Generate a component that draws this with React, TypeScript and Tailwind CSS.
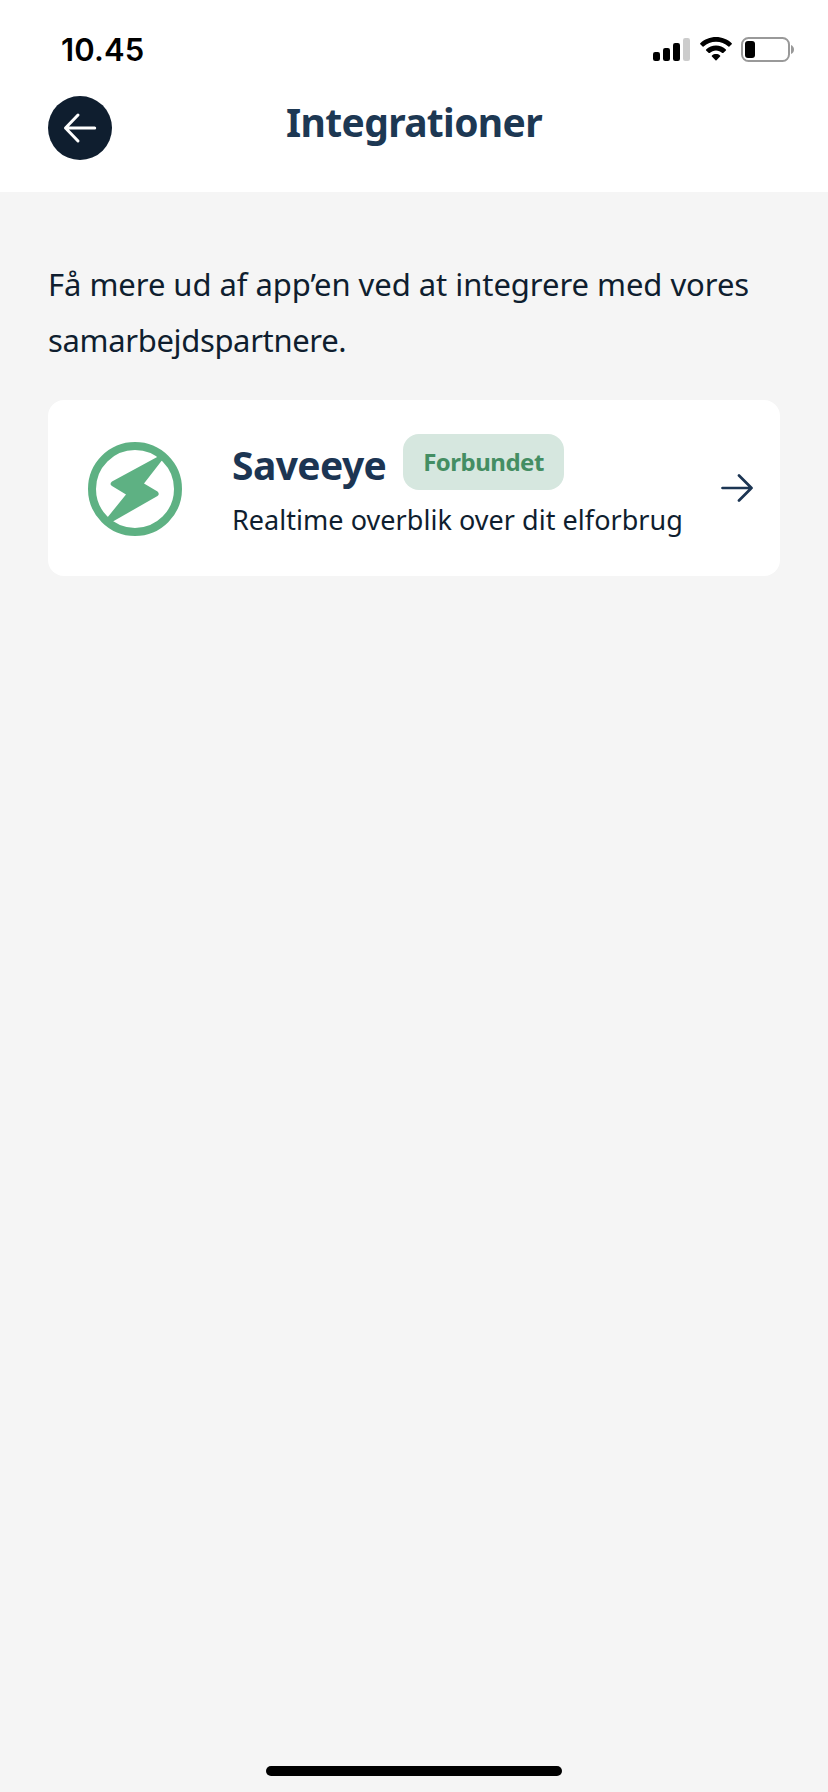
import React from "react";

function StatusBar() {
  return (
    <div className="flex h-24 items-start justify-between pt-[30px] pr-[33px] pl-[61px]">
      <span className="font-['Inter',sans-serif] text-[31px] leading-10 font-semibold tracking-[0.15px] text-black">10.45</span>
      <div className="flex items-start pt-[6px]">
        <svg className="mt-[2px] h-6 w-[38px]" viewBox="0 0 38 24">
          <rect x="0" y="14" width="7" height="9" rx="2.2" />
          <rect x="10" y="10" width="7" height="13" rx="2.2" />
          <rect x="20" y="5" width="7" height="18" rx="2.2" />
          <rect x="30" y="0" width="7" height="23" rx="2.2" fill="#cccccc" />
        </svg>
        <svg className="mt-px ml-[9px] h-6 w-8" viewBox="0 0 32 24">
          <path d="M16 0C22 0 27.600 2.300 31.700 6.200Q32.200 6.800 31.700 7.300L29.400 9.600Q28.900 10 28.400 9.600C25 6.500 20.700 4.700 16 4.700S7 6.500 3.600 9.600Q3.100 10 2.600 9.600L.3 7.300Q-.2 6.800.3 6.200C4.400 2.300 10 0 16 0Z" />
          <path d="M16 8.600C19.700 8.600 23.200 10 25.900 12.400Q26.400 12.900 25.900 13.400L23.200 15.900Q22.700 16.300 22.200 15.900C20.500 14.300 18.300 13.400 16 13.400S11.500 14.300 9.800 15.900Q9.300 16.300 8.800 15.900L6.100 13.400Q5.600 12.900 6.100 12.400C8.800 10 12.300 8.600 16 8.600Z" />
          <path d="M16 17C17.500 17 18.900 17.500 20 18.400Q20.700 19 20.100 19.600L16.500 23.200Q16 23.700 15.500 23.200L11.900 19.600Q11.300 19 12 18.400C13.100 17.500 14.500 17 16 17Z" />
        </svg>
        <svg className="ml-[9px] h-[26px] w-[54px]" viewBox="0 0 54 26">
          <rect x="1" y="2" width="47" height="23" rx="6.500" fill="none" stroke="#999999" strokeWidth="2" />
          <rect x="4" y="5" width="10" height="17" rx="3" />
          <path d="M50 9Q53 10.500 53 13.500T50 18Z" fill="#999999" />
        </svg>
      </div>
    </div>
  );
}

function Header() {
  return (
    <header className="grid h-24 grid-cols-[64px_1fr_64px] items-start px-12">
      <button aria-label="Tilbage" className="flex size-16 items-center justify-center rounded-full bg-[#0f1e2f]">
        <svg className="size-9" viewBox="0 0 36 36" fill="none" stroke="white" strokeWidth="3" strokeLinecap="round" strokeLinejoin="round">
          <path d="M32.700 18H3.500M16 5L3.500 18L16 31" />
        </svg>
      </button>
      <h1 className="-mt-px text-center text-[39px] leading-[54px] font-bold tracking-[-0.65px] text-[#1d3853]">Integrationer</h1>
    </header>
  );
}

function SaveeyeLogo() {
  return (
    <svg className="mt-[2px] size-[94px] shrink-0" viewBox="0 0 94 94">
      <circle cx="47" cy="47" r="43" fill="none" stroke="#5eb183" strokeWidth="8" />
      <path
        d="M71 14L24 39.500Q21 42 24 44L38 52.500L19 76L24 80L69.500 54Q72 52 69.500 49.500L56 41.500L75 17Z"
        fill="#5eb183"
      />
    </svg>
  );
}

function IntegrationCard() {
  return (
    <a className="flex h-44 items-center rounded-2xl bg-white pr-[27px] pl-10">
      <SaveeyeLogo />
      <div className="ml-[50px] flex h-full flex-1 flex-col pt-[34px]">
        <div className="flex h-14 items-start">
          <h2 className="mt-1 w-[171px] text-[39px] leading-[54px] font-bold whitespace-nowrap tracking-[-0.6px] text-[#1c3553]">Saveeye</h2>
          <span className="flex h-14 w-[161px] items-center justify-center rounded-2xl bg-[#d6e7df] text-[24px] leading-8 font-bold tracking-[-0.5px] text-[#448e63]">
            Forbundet
          </span>
        </div>
        <p className="mt-[10px] text-[27px] leading-10 whitespace-nowrap tracking-[0.04px] text-[#0f1e2f]">Realtime overblik over dit elforbrug</p>
      </div>
      <svg className="h-8 w-8 shrink-0" viewBox="0 0 32 32" fill="none" stroke="#1c3553" strokeWidth="2.700" strokeLinecap="round" strokeLinejoin="round">
        <path d="M1.500 16H30.500M18 3.500L30.500 16L18 28.500" />
      </svg>
    </a>
  );
}

export default function App() {
  return (
    <div className="flex h-[1792px] w-[828px] flex-col bg-[#f5f5f5] font-['Noto_Sans',sans-serif]">
      <div className="bg-white">
        <StatusBar />
        <Header />
      </div>
      <main className="flex-1 px-12 pt-16">
        <p className="mb-8 text-[31px] leading-14 whitespace-nowrap text-[#0f1e2f]">
          <span className="tracking-[-0.05px]">Få mere ud af app’en ved at integrere med vores</span>
          <br />
          <span className="tracking-[-0.35px]">samarbejdspartnere.</span>
        </p>
        <IntegrationCard />
      </main>
      <div className="mb-4 h-[10px] w-[296px] self-center rounded-full bg-black" />
    </div>
  );
}
